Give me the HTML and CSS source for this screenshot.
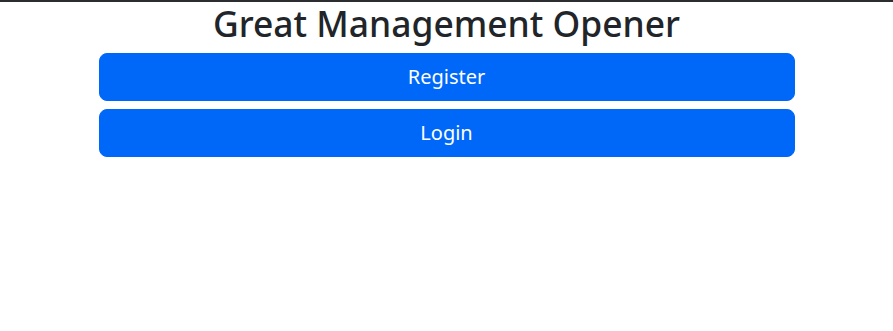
FILE: index.html
```html
<!DOCTYPE html>
<html lang="en">
<head>
  <meta charset="UTF-8">
  <meta name="viewport" content="width=device-width, initial-scale=1.0">
  <title>Great Management Opener</title>
  <link rel="stylesheet" href="styles.css">
</head>
<body>
  <div class="container">
    <h1 class="title">Great Management Opener</h1>
    <button type="button" class="btn">Register</button>
    <button type="button" class="btn">Login</button>
  </div>
</body>
</html>
```

FILE: styles.css
```css
body {
  margin: 0;
  border-top: 2px solid #2b2d31;
  font-family: "Noto Sans", sans-serif;
  color: #212529;
  background: #fff;
}
.container {
  max-width: 696px;
  margin: 0 auto;
  padding: 0 12px;
}
.title {
  margin: 0 0 9px;
  font-size: 35.4px;
  font-weight: 500;
  line-height: 1.2;
  text-align: center;
}
.btn {
  display: block;
  width: 100%;
  margin-bottom: 8px;
  padding: 8px 16px;
  font-family: inherit;
  font-size: 20px;
  line-height: 1.5;
  color: #fff;
  background-color: #0068f9;
  border: 1px solid #0068f9;
  border-radius: 8px;
  cursor: pointer;
}
```
